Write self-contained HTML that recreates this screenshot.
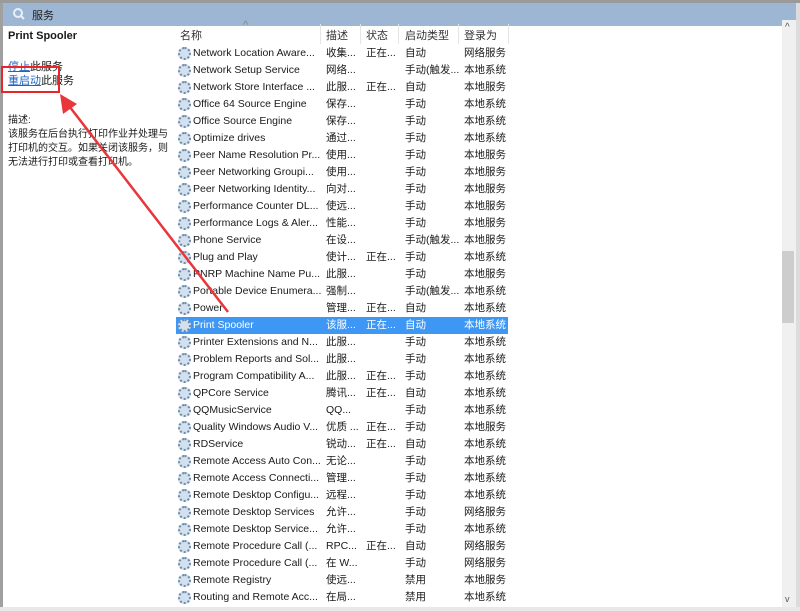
<!DOCTYPE html>
<html><head><meta charset="utf-8"><style>
*{margin:0;padding:0;box-sizing:border-box}
body{width:800px;height:611px;background:#fff;position:relative;overflow:hidden;font-family:"Liberation Sans","Noto Sans CJK SC",sans-serif;font-size:11px;color:#1a1a1a}
.top{position:absolute;left:0;top:0;width:800px;height:3px;background:#9a9a9a}
.title{position:absolute;left:2px;top:3px;width:794px;height:23px;background:#9db6d4}
.title span{position:absolute;left:30px;top:4px;font-size:11px;color:#222}
.lb{position:absolute;left:0;top:3px;width:3px;height:608px;background:#a0a0a0}
.left{position:absolute;left:3px;top:26px;width:165px;height:585px;background:#fff}
.panel{position:absolute;left:168px;top:17px;width:628px;height:594px;background:#fff;border-top-left-radius:8px}
.rb{position:absolute;left:796px;top:3px;width:4px;height:608px;background:#dcdcdc}
.sb{position:absolute;left:782px;top:20px;width:14px;height:591px;background:#f0f0f0}
.thumb{position:absolute;left:782px;top:251px;width:12px;height:72px;background:#cdcdcd}
.hdr{position:absolute;top:26px;height:17px;font-size:11px;color:#333}
#rows{position:absolute;left:0;top:0;width:800px;height:607px;overflow:hidden}
.row{position:absolute;left:176px;width:332px;height:17px;line-height:17px;white-space:nowrap;font-size:10.5px}
.row.sel{background:#3e97f4;color:#fff}
.row span{position:absolute;top:0;overflow:hidden}
.c1{left:17px;width:130px}.c2{left:150px;width:38px}.c3{left:190px;width:37px}.c4{left:229px;width:57px}.c5{left:288px;width:44px}
.ic{position:absolute;left:2px;top:2px;width:13px;height:13px;border-radius:50%;border:2px dotted #6e8bab;background:#d3e0ee}
.bot{position:absolute;left:0;top:607px;width:800px;height:4px;background:#e8e8e8}
</style></head><body>
<div class="panel"></div>
<div class="title"><svg style="position:absolute;left:10px;top:4px" width="14" height="14"><circle cx="6" cy="6" r="4" fill="none" stroke="#e8f0f8" stroke-width="2"/><line x1="9" y1="9" x2="12" y2="12" stroke="#e8f0f8" stroke-width="2"/></svg><span>服务</span></div>
<div class="top"></div>
<div class="lb"></div>
<div class="left"></div>
<div style="position:absolute;left:8px;top:30px;font-weight:bold;font-size:11px">Print Spooler</div>
<div style="position:absolute;left:8px;top:58px;font-size:11px"><u style="color:#1f63c5">停止</u>此服务</div>
<div style="position:absolute;left:8px;top:72px;font-size:11px"><u style="color:#1f63c5">重启动</u>此服务</div>
<div style="position:absolute;left:8px;top:114px;font-size:10px;line-height:14px;width:162px">描述:<br>该服务在后台执行打印作业并处理与打印机的交互。如果关闭该服务，则无法进行打印或查看打印机。</div>
<div style="position:absolute;left:1px;top:66px;width:59px;height:27px;border:2px solid #e8262a"></div>
<div class="hdr" style="left:180px;top:27px">名称</div>
<div class="hdr" style="left:243px;top:19px;color:#888">^</div>
<div class="hdr" style="left:326px;top:27px">描述</div>
<div class="hdr" style="left:366px;top:27px">状态</div>
<div class="hdr" style="left:405px;top:27px">启动类型</div>
<div class="hdr" style="left:464px;top:27px">登录为</div>
<div style="position:absolute;left:320px;top:24px;width:1px;height:20px;background:#e5e5e5"></div>
<div style="position:absolute;left:360px;top:24px;width:1px;height:20px;background:#e5e5e5"></div>
<div style="position:absolute;left:398px;top:24px;width:1px;height:20px;background:#e5e5e5"></div>
<div style="position:absolute;left:458px;top:24px;width:1px;height:20px;background:#e5e5e5"></div>
<div style="position:absolute;left:508px;top:24px;width:1px;height:20px;background:#e5e5e5"></div>
<div id="rows"></div>
<div class="rb"></div>
<div class="sb"></div>
<div class="thumb"></div>
<div style="position:absolute;left:785px;top:22px;font-size:10px;color:#555">^</div>
<div style="position:absolute;left:785px;top:594px;font-size:9px;color:#555">v</div>
<div class="bot"></div>
<svg style="position:absolute;left:0;top:0" width="800" height="611"><line x1="228" y1="312" x2="66" y2="102" stroke="#e8363a" stroke-width="2.5"/><polygon points="60,94 63,114 77,104" fill="#e8363a"/></svg>
<script>
var d=[
["Network Location Aware...","收集...","正在...","自动","网络服务"],
["Network Setup Service","网络...","","手动(触发...","本地系统"],
["Network Store Interface ...","此服...","正在...","自动","本地服务"],
["Office 64 Source Engine","保存...","","手动","本地系统"],
["Office Source Engine","保存...","","手动","本地系统"],
["Optimize drives","通过...","","手动","本地系统"],
["Peer Name Resolution Pr...","使用...","","手动","本地服务"],
["Peer Networking Groupi...","使用...","","手动","本地服务"],
["Peer Networking Identity...","向对...","","手动","本地服务"],
["Performance Counter DL...","使远...","","手动","本地服务"],
["Performance Logs & Aler...","性能...","","手动","本地服务"],
["Phone Service","在设...","","手动(触发...","本地服务"],
["Plug and Play","使计...","正在...","手动","本地系统"],
["PNRP Machine Name Pu...","此服...","","手动","本地服务"],
["Portable Device Enumera...","强制...","","手动(触发...","本地系统"],
["Power","管理...","正在...","自动","本地系统"],
["Print Spooler","该服...","正在...","自动","本地系统"],
["Printer Extensions and N...","此服...","","手动","本地系统"],
["Problem Reports and Sol...","此服...","","手动","本地系统"],
["Program Compatibility A...","此服...","正在...","手动","本地系统"],
["QPCore Service","腾讯...","正在...","自动","本地系统"],
["QQMusicService","QQ...","","手动","本地系统"],
["Quality Windows Audio V...","优质 ...","正在...","手动","本地服务"],
["RDService","锐动...","正在...","自动","本地系统"],
["Remote Access Auto Con...","无论...","","手动","本地系统"],
["Remote Access Connecti...","管理...","","手动","本地系统"],
["Remote Desktop Configu...","远程...","","手动","本地系统"],
["Remote Desktop Services","允许...","","手动","网络服务"],
["Remote Desktop Service...","允许...","","手动","本地系统"],
["Remote Procedure Call (...","RPC...","正在...","自动","网络服务"],
["Remote Procedure Call (...","在 W...","","手动","网络服务"],
["Remote Registry","使远...","","禁用","本地服务"],
["Routing and Remote Acc...","在局...","","禁用","本地系统"],
["","","","",""]];
var h="";d.forEach(function(r,i){h+='<div class="row'+(i==16?' sel':'')+'" style="top:'+(45+i*17)+'px"><i class="ic"></i><span class="c1">'+r[0]+'</span><span class="c2">'+r[1]+'</span><span class="c3">'+r[2]+'</span><span class="c4">'+r[3]+'</span><span class="c5">'+r[4]+'</span></div>'});
document.getElementById("rows").innerHTML=h;
</script>
</body></html>
